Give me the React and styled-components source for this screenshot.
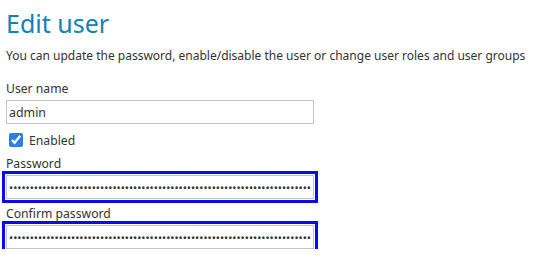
import React from 'react';
import styled, { createGlobalStyle } from 'styled-components';

const GlobalStyle = createGlobalStyle`
  body {
    margin: 0;
    background: #ffffff;
    font-family: "Noto Sans", "Open Sans", sans-serif;
    color: #333333;
  }
`;

const Page = styled.div`
  padding: 6px 6px 0 6px;
`;

const Title = styled.h1`
  margin: 0;
  font-size: 25px;
  line-height: 34px;
  font-weight: 400;
  color: #1381b9;
`;

const Intro = styled.p`
  margin: 7px 0 15px 0;
  font-size: 12px;
  line-height: 18px;
  white-space: nowrap;
`;

const Field = styled.div`
  display: flex;
  flex-direction: column;
  gap: 2px;
  margin-bottom: ${p => p.spacing || 0}px;
`;

const Label = styled.label`
  font-size: 12.2px;
  line-height: 18px;
  color: #333333;
`;

const TextInput = styled.input`
  box-sizing: border-box;
  width: 308px;
  height: 24px;
  margin: 0;
  padding: 0 2px;
  border: 1px solid #c4c4c4;
  border-radius: 0;
  font-family: "Noto Sans", sans-serif;
  font-size: ${p => (p.type === 'password' ? 11 : 12.4)}px;
  color: #333333;
  background: #ffffff;
  outline: ${p => (p.highlighted ? '3px solid #0a0aee' : 'none')};
  outline-offset: 1px;
`;

const CheckRow = styled.label`
  display: flex;
  align-items: center;
  gap: 6px;
  height: 18px;
  margin: 7px 0 6px 3px;
  font-size: 12.2px;
  color: #333333;
`;

const Check = styled.input`
  width: 14px;
  height: 14px;
  margin: 0;
  accent-color: #2f7de1;
`;

const secret = '•'.repeat(140);

export default function App() {
  return (
    <>
      <GlobalStyle />
      <Page>
        <Title>Edit user</Title>
        <Intro>You can update the password, enable/disable the user or change user roles and user groups</Intro>
        <Field>
          <Label>User name</Label>
          <TextInput type="text" defaultValue="admin" />
        </Field>
        <CheckRow>
          <Check type="checkbox" defaultChecked />
          Enabled
        </CheckRow>
        <Field spacing={6}>
          <Label>Password</Label>
          <TextInput type="password" defaultValue={secret} highlighted />
        </Field>
        <Field>
          <Label>Confirm password</Label>
          <TextInput type="password" defaultValue={secret} highlighted />
        </Field>
      </Page>
    </>
  );
}
